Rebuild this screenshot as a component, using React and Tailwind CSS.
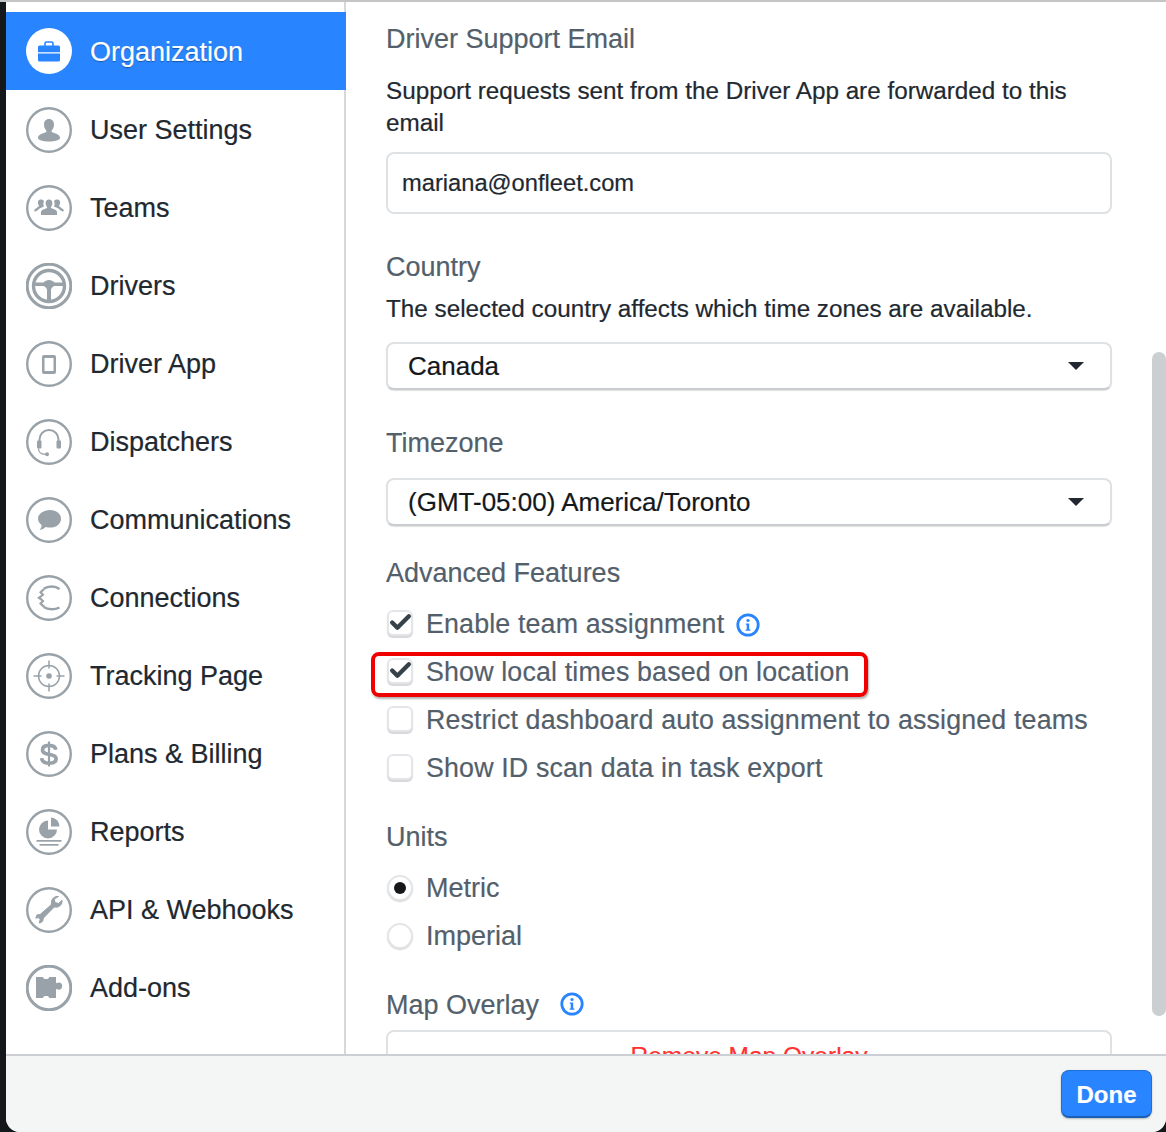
import { Check } from "lucide-react"

const font = "font-['Liberation_Sans','Arial',sans-serif]"

const Briefcase = () => (
  <svg viewBox="0 0 46 46" className="h-[46px] w-[46px]">
    <circle cx="23" cy="23" r="23" fill="#fff" />
    <path d="M19 18v-2.500a1.500 1.500 0 0 1 1.500-1.500h5a1.500 1.500 0 0 1 1.500 1.500V18" fill="none" stroke="#2884ff" strokeWidth="1.600" />
    <path d="M13.500 17.500h19a1.500 1.500 0 0 1 1.500 1.500v5.200H12V19a1.500 1.500 0 0 1 1.500-1.500z" fill="#2884ff" />
    <path d="M12 25.600h22V32a1.500 1.500 0 0 1-1.500 1.500h-19A1.500 1.500 0 0 1 12 32z" fill="#2884ff" />
  </svg>
)

const Ring = ({ children, thick }) => (
  <svg viewBox="0 0 46 46" className="h-[46px] w-[46px]" fill="#98a2a8">
    <circle cx="23" cy="23" r="21.800" fill="none" stroke="#98a2a8" strokeWidth={thick ? 3 : 2.4} />
    {children}
  </svg>
)

const icons = {
  user: (
    <Ring>
      <path d="M23 12c3.200 0 5 2.400 5 5.400 0 2.600-1 4.600-2.200 6-.5.600-.3 1.500.4 1.800 3.400 1.300 7.800 2.300 7.800 5.500 0 2.600-5.400 3.800-11 3.800s-11-1.200-11-3.800c0-3.200 4.400-4.200 7.800-5.500.7-.3.900-1.200.4-1.800-1.200-1.400-2.200-3.400-2.200-6 0-3 1.800-5.400 5-5.400z" />
    </Ring>
  ),
  teams: (
    <Ring>
      <path d="M23 14.500c2.200 0 3.400 1.600 3.400 3.600 0 1.800-.7 3.100-1.400 4-.3.500-.1 1 .4 1.200 2.500 1 5.600 1.600 5.600 4.200V30H15v-2.500c0-2.600 3.100-3.200 5.600-4.200.5-.2.700-.7.400-1.200-.7-.9-1.400-2.200-1.400-4 0-2 1.200-3.600 3.400-3.600z" />
      <path d="M15.500 14.500c1.300 0 2.200.8 2.500 1.900-.8 1.100-.9 3.300 0 5.100-2.400 1.100-4.600 1.500-6 3.500l-3 1.800-1-1.800 4.500-3.400c.5-.3.600-.8.300-1.300-.5-.7-.9-1.600-.9-2.900 0-1.600 1.200-2.900 2.600-2.900z" />
      <path d="M30.500 14.500c-1.300 0-2.200.8-2.500 1.900.8 1.100.9 3.300 0 5.100 2.400 1.100 4.600 1.500 6 3.500l3 1.800 1-1.800-4.500-3.400c-.5-.3-.6-.8-.3-1.300.5-.7.900-1.600.9-2.900 0-1.600-1.200-2.900-2.600-2.900z" />
    </Ring>
  ),
  wheel: (
    <Ring thick>
      <circle cx="23" cy="23" r="15.500" fill="none" stroke="#98a2a8" strokeWidth="3.400" />
      <path d="M8 19.500h9.500c1.300-1.600 3.300-2.500 5.500-2.500s4.200.9 5.500 2.500H38v3.500H29c-1.500 0-3.400 1.800-4 3.500v11h-4v-11c-.6-1.700-2.500-3.500-4-3.500H8z" />
    </Ring>
  ),
  phone: (
    <Ring>
      <path fillRule="evenodd" d="M18 14h10a2 2 0 0 1 2 2v15a2 2 0 0 1-2 2H18a2 2 0 0 1-2-2V16a2 2 0 0 1 2-2zm.5 3v13h9V17z" />
    </Ring>
  ),
  headset: (
    <Ring>
      <path d="M13.500 22.500v-2a9.500 9.500 0 0 1 19 0v2" fill="none" stroke="#98a2a8" strokeWidth="2" />
      <rect x="11" y="21.500" width="4.500" height="8" rx="1" />
      <rect x="30.500" y="21.500" width="4.500" height="8" rx="1" />
      <path d="M12.500 29.500c0 4 2.500 5.800 7 5.800" fill="none" stroke="#98a2a8" strokeWidth="1.200" />
      <circle cx="21" cy="35.200" r="2" />
    </Ring>
  ),
  chat: (
    <Ring>
      <path d="M24 13c6.200 0 11 3.500 11 8.700 0 5.300-4.800 8.800-11 8.800-1.500 0-3-.2-4.300-.6-1.700 1.500-3.500 2.600-6 3.100 1.200-1.500 1.900-3.100 1.900-5C13.600 26.400 12 24.300 12 21.700 12 16.500 17.800 13 24 13z" />
    </Ring>
  ),
  connect: (
    <Ring>
      <path d="M33.500 14c-2-1.600-4.800-2.500-8-2.500-3 0-5.700.9-7.800 2.300M33.500 32.500c-2.200 1.200-4.800 1.800-8 1.800-3.100 0-5.800-.8-7.800-2.200" fill="none" stroke="#98a2a8" strokeWidth="2.400" />
      <path d="M17 13.500l-4 3.700 2.500 2.500-4.500 3.100 4.500 3.300-2.500 2.500 4 3.800 2-1.300-3-2.500 2.500-2.500-3.600-3.300 3.600-3.100-2.500-2.500 3-2.500z" />
    </Ring>
  ),
  target: (
    <Ring>
      <circle cx="23" cy="23" r="10.500" fill="none" stroke="#98a2a8" strokeWidth="1.500" />
      <circle cx="23" cy="23" r="2.800" />
      <path d="M23 7.500v8M23 30.500v8M7.500 23h8M30.500 23h8" stroke="#98a2a8" strokeWidth="1.500" />
    </Ring>
  ),
  dollar: (
    <Ring>
      <path d="M29.800 18.800c-.3-2.800-2.800-4.400-6.800-4.400-4 0-6.500 1.700-6.500 4.500 0 6.400 13.600 2.900 13.600 8.800 0 2.900-2.800 4.500-7.100 4.500-4.300 0-7-1.900-7.300-5.100" fill="none" stroke="#98a2a8" strokeWidth="3.600" />
      <path d="M23 10.500v25" stroke="#98a2a8" strokeWidth="2.200" />
    </Ring>
  ),
  reports: (
    <Ring>
      <path d="M22 11.500v9h9a9 9 0 1 1-9-9z" />
      <path d="M25 8.500a9 9 0 0 1 8.500 9H25z" />
      <rect x="10.500" y="31" width="25" height="1.700" />
      <rect x="13.500" y="35" width="19" height="1.700" />
    </Ring>
  ),
  wrench: (
    <Ring>
      <path stroke="#98a2a8" strokeWidth="1" strokeLinejoin="round" d="M32.500 9.500c-3.800-.6-7.300 2.300-7 6.300 0 1 .1 1.600-.6 2.300L14.700 27c-.7.600-1.400.6-2.200.5-.9-.1-1.300.2-1.700.9l-1 2.800 2.400-.7 2 2-1 3.500c2-.2 3.700-1.500 3.900-3.300.1-1 .2-1.600.9-2.300l9.500-9.700c.7-.7 1.500-.7 2.300-.6 3.800.4 6.800-3 6.200-6.800l-3.500 3.200-3.500-1-.9-3.400z" />
    </Ring>
  ),
  puzzle: (
    <Ring thick>
      <path d="M10 12h6.500c.5 0 .8.300.8.800 0 1.700 5.600 1.700 5.600 0 0-.5.300-.8.800-.8H30v5.500c0 .6.400.9.900.6 1.700-1.300 5.300-1 5.300 2.900 0 4-3.600 4.300-5.300 3-.5-.3-.9 0-.9.600V33h-6.300c-.5 0-.8-.3-.8-.800 0-1.700-5.600-1.700-5.600 0 0 .5-.3.800-.8.800H10z" />
    </Ring>
  ),
}

const navItems = [
  ["User Settings", "user"],
  ["Teams", "teams"],
  ["Drivers", "wheel"],
  ["Driver App", "phone"],
  ["Dispatchers", "headset"],
  ["Communications", "chat"],
  ["Connections", "connect"],
  ["Tracking Page", "target"],
  ["Plans & Billing", "dollar"],
  ["Reports", "reports"],
  ["API & Webhooks", "wrench"],
  ["Add-ons", "puzzle"],
]

const NavRow = ({ label, icon }) => (
  <div className="flex h-[78px] items-center gap-[18px] pl-5 text-[27px] text-[#212830]">
    {icons[icon]}
    <span className="pt-px">{label}</span>
  </div>
)

const Info = () => (
  <svg viewBox="0 0 24 24" className="h-6 w-6">
    <circle cx="12" cy="12" r="10.200" fill="none" stroke="#2884ff" strokeWidth="2.800" />
    <circle cx="12" cy="7.500" r="1.600" fill="#2884ff" />
    <path d="M9.800 10.500h3.400v6h1.200v1.300H9.600v-1.300h1.100v-4.700h-.9z" fill="#2884ff" />
  </svg>
)

const Label = ({ children, className = "" }) => (
  <div className={"h-8 pt-px text-[27px] leading-8 text-[#535f6b] " + className}>{children}</div>
)

const Para = ({ children, className = "" }) => (
  <p className={"text-[24.25px] leading-8 text-[#212830] " + className}>{children}</p>
)

const Select = ({ value, className = "" }) => (
  <div className={"flex h-12 items-center justify-between rounded-lg border-2 border-[#dfe2e5] border-b-[#c9cdd1] bg-white pl-5 pr-[26px] text-[26px] text-[#14181b] shadow-[0_1px_1px_rgba(0,0,0,0.12)] " + className}>
    <span>{value}</span>
    <span className="h-0 w-0 border-x-8 border-t-8 border-x-transparent border-t-[#212830]" />
  </div>
)

const CheckRow = ({ label, checked, children }) => (
  <div className="flex h-12 items-center gap-[13px]">
    <span className="mb-[3px] ml-px flex h-[26px] w-[26px] items-center justify-center rounded-md border-2 border-[#e3e5e8] bg-white shadow-[0_2px_1px_rgba(0,0,0,0.16)]">
      {checked && <Check size={25} strokeWidth={4.2} className="shrink-0 text-[#36424a]" />}
    </span>
    <span className="pt-px text-[26.8px] tracking-[0.15px] text-[#535f6b]">{label}</span>
    {children}
  </div>
)

const RadioRow = ({ label, checked }) => (
  <div className="flex h-12 items-center gap-[13px]">
    <span className="ml-px flex h-[26px] w-[26px] items-center justify-center rounded-full border-2 border-[#e3e5e8] bg-white shadow-[0_1px_1px_rgba(0,0,0,0.16)]">
      {checked && <span className="h-3 w-3 rounded-full bg-[#14181b]" />}
    </span>
    <span className="pt-px text-[27px] text-[#535f6b]">{label}</span>
  </div>
)

export default function App() {
  return (
    <div className={"relative flex h-[1132px] w-[1166px] flex-col overflow-hidden bg-[#14181b] [-webkit-text-stroke:0.2px] " + font}>
      <div className="h-0.5 w-full shrink-0 bg-[#c4c6c6]" />
      <div className="ml-1.5 flex min-h-0 flex-1 flex-col overflow-hidden rounded-b-[14px] bg-white">
        <div className="flex min-h-0 flex-1">
          {/* sidebar */}
          <div className="w-[340px] shrink-0 border-r-2 border-[#d6d8da] pt-2.5">
            <div className="mb-px mr-[-2px] flex h-[78px] items-center gap-[18px] bg-[#2884ff] pl-5 text-[27px] text-white [text-shadow:0_1px_1px_rgba(0,0,0,0.35)]">
              <Briefcase />
              <span className="pt-0.5">Organization</span>
            </div>
            {navItems.map(([label, icon]) => (
              <NavRow key={label} label={label} icon={icon} />
            ))}
          </div>

          {/* settings form */}
          <div className="min-w-0 flex-1 overflow-hidden pl-10 pr-[54px] pt-5">
            <Label>Driver Support Email</Label>
            <Para className="mt-[21px]">Support requests sent from the Driver App are forwarded to this email</Para>
            <div className="mt-[13px] flex h-[62px] items-center rounded-lg border-2 border-[#dfe2e5] px-3.5 pt-0.5 text-[23.7px] text-[#212830]">
              mariana@onfleet.com
            </div>

            <Label className="mt-9">Country</Label>
            <Para className="mt-[11px]">The selected country affects which time zones are available.</Para>
            <Select value="Canada" className="mt-[17px]" />

            <Label className="mt-9">Timezone</Label>
            <Select value="(GMT-05:00) America/Toronto" className="mt-5" />

            <Label className="mt-[30px]">Advanced Features</Label>
            <div className="mt-3">
              <CheckRow label="Enable team assignment" checked>
                <span className="ml-[-1px] mt-0.5"><Info /></span>
              </CheckRow>
              <div className="relative">
                <CheckRow label="Show local times based on location" checked />
                <div className="absolute left-[-15px] top-1 h-[45px] w-[497px] rounded-lg border-4 border-[#f00000] shadow-[1px_2px_2px_rgba(0,0,0,0.3)]" />
              </div>
              <CheckRow label="Restrict dashboard auto assignment to assigned teams" />
              <CheckRow label="Show ID scan data in task export" />
            </div>

            <Label className="mt-7">Units</Label>
            <div className="mt-3">
              <RadioRow label="Metric" checked />
              <RadioRow label="Imperial" />
            </div>

            <div className="mt-7 flex h-8 items-center gap-[21px]">
              <span className="pt-px text-[27px] leading-8 text-[#535f6b]">Map Overlay</span>
              <Info />
            </div>
            <div className="mt-2.5 flex h-[52px] items-center justify-center rounded-lg border-2 border-[#dfe2e5] text-[24.5px] text-[#ff3030]">
              Remove Map Overlay
            </div>
          </div>
        </div>

        <div className="flex h-[78px] shrink-0 items-start justify-end border-t-2 border-[#ccd0d4] bg-[#f4f6f6] pr-3.5 pt-3.5">
          <button className="flex h-12 w-[91px] items-center justify-center rounded-lg border border-b-2 border-[#1f6fd6] border-b-[#1a5fb8] bg-[#2884ff] pt-0.5 text-[24px] font-bold text-white shadow-[0_1px_2px_rgba(0,0,0,0.25)]">
            Done
          </button>
        </div>
      </div>

      {/* overlay scrollbar */}
      <div className="absolute right-0 top-[352px] h-[664px] w-3.5 rounded-t-lg rounded-b-lg bg-[#cbcfd2]" />
    </div>
  )
}
